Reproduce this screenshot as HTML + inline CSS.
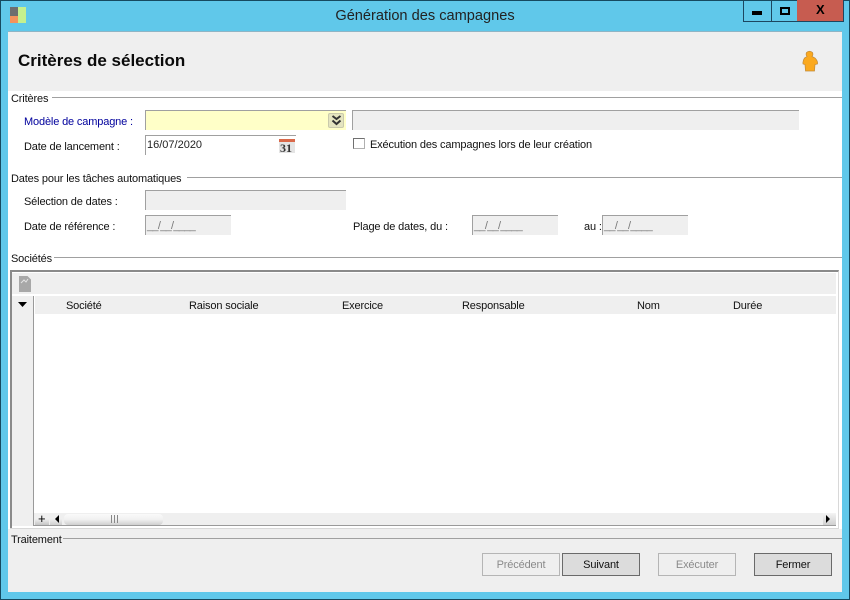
<!DOCTYPE html>
<html lang="fr"><head><meta charset="utf-8"><title>Génération des campagnes</title>
<style>
html,body{margin:0;padding:0;background:#fff}
body{position:relative;width:850px;height:600px;overflow:hidden;font:11px "Liberation Sans",sans-serif;letter-spacing:-.15px;color:#111}
div,span{position:absolute;box-sizing:border-box}
.t{white-space:nowrap;line-height:14px}
.l{height:1px;background:#a0a0a0}
.f{background:#efefef;border-top:1px solid #a0a0a0;border-left:1px solid #a0a0a0}
.m{color:#777;font-size:11px;padding-left:1px;line-height:21px;letter-spacing:-.7px}
.b{height:23px;width:78px;top:553px;border:1px solid #6a6a6a;background:#dcdcdc;text-align:center;line-height:23px}
.d{border-color:#b5b5b5;background:#efefef;color:#8a8a8a}
.h{top:299px}
.w{top:0;height:22px;border:1px solid #1c4660;border-top:0}
</style></head><body>
<div style="left:0;top:0;width:850px;height:600px;background:#60c8ea;border:1px solid #164a60"></div>
<div style="left:10px;top:7px;width:8px;height:9px;background:#6e6e6e"></div>
<div style="left:10px;top:16px;width:8px;height:7px;background:#f4935c"></div>
<div style="left:18px;top:7px;width:8px;height:16px;background:#c5f08e"></div>
<div class="t" style="left:0;top:8px;width:850px;text-align:center;font-size:14.6px;line-height:16px;letter-spacing:0;color:#222">Génération des campagnes</div>
<div class="w" style="left:743px;width:29px"><span style="left:8px;top:11px;width:10px;height:4px;background:#000"></span></div>
<div class="w" style="left:771px;width:27px;border-left:0"><span style="left:9px;top:7px;width:10px;height:8px;border:2px solid #000"></span></div>
<div class="w" style="left:797px;width:47px;background:#c75c50;border-left:0"><span class="t" style="left:19px;top:3px;font-size:13px;font-weight:bold;letter-spacing:0;color:#000">X</span></div>

<div style="left:8px;top:31px;width:834px;height:561px;background:#fff"></div>
<div style="left:8px;top:31px;width:834px;height:60px;background:#efefef;border-top:1px solid #8fb5c5"></div>
<div class="t" style="left:18px;top:51px;font-size:17px;line-height:20px;font-weight:bold;letter-spacing:0;color:#0a0a0a">Critères de sélection</div>
<svg style="position:absolute;left:800px;top:50px" width="20" height="22" viewBox="0 0 20 22"><path d="M6.500 2.500Q9.500 0 12.500 2.500Q13.500 5 12 6.500L15 8Q18 11 17.500 14L15 14.500L14.500 21L5.500 21L5 14.500L3 14Q2.500 11 4.500 8L7 6.500Q5.500 5 6.500 2.500Z" fill="#fba91e" stroke="#c08a3c" stroke-width=".7"/></svg>

<div class="t" style="left:11px;top:92px">Critères</div>
<div class="l" style="left:52px;top:97px;width:790px"></div>
<div class="t" style="left:24px;top:115px;color:#00009c">Modèle de campagne :</div>
<div style="left:145px;top:110px;width:201px;height:20px;background:#ffffc8;border-top:1px solid #a0a0a0;border-left:1px solid #a0a0a0"></div>
<div style="left:328px;top:113px;width:16px;height:15px;background:#e4e4c0;border:1px solid #c9c9ac;border-radius:2px"></div>
<svg style="position:absolute;left:331px;top:114px" width="11" height="13" viewBox="0 0 11 13"><path d="M1.500 2L5.500 5L9.500 2M1.500 6.500L5.500 10L9.500 6.500" fill="none" stroke="#333" stroke-width="2"/></svg>
<div class="f" style="left:352px;top:110px;width:447px;height:20px"></div>
<div class="t" style="left:24px;top:140px">Date de lancement :</div>
<div style="left:145px;top:135px;width:151px;height:20px;border-top:1px solid #a0a0a0;border-left:1px solid #a0a0a0"></div>
<div class="t" style="left:147px;top:138px;letter-spacing:0;color:#222">16/07/2020</div>
<div style="left:279px;top:139px;width:16px;height:14px;background:#e4e4e4;border-top:3px solid #d9694a"></div>
<div class="t" style="left:280px;top:142px;font:bold 12px/12px 'Liberation Serif',serif;letter-spacing:0;color:#333">31</div>
<div style="left:353px;top:138px;width:12px;height:11px;border:1px solid #b0b0b0;border-top-color:#707070;border-left-color:#707070;background:#fff"></div>
<div class="t" style="left:370px;top:138px">Exécution des campagnes lors de leur création</div>

<div class="t" style="left:11px;top:172px">Dates pour les tâches automatiques</div>
<div class="l" style="left:187px;top:177px;width:655px"></div>
<div class="t" style="left:24px;top:195px">Sélection de dates :</div>
<div class="f" style="left:145px;top:190px;width:201px;height:20px"></div>
<div class="t" style="left:24px;top:220px">Date de référence :</div>
<div class="f m" style="left:145px;top:215px;width:86px;height:20px">__/__/____</div>
<div class="t" style="left:353px;top:220px">Plage de dates, du :</div>
<div class="f m" style="left:472px;top:215px;width:86px;height:20px">__/__/____</div>
<div class="t" style="left:584px;top:220px">au :</div>
<div class="f m" style="left:602px;top:215px;width:86px;height:20px">__/__/____</div>

<div class="t" style="left:11px;top:252px">Sociétés</div>
<div class="l" style="left:54px;top:257px;width:788px"></div>
<div style="left:10px;top:270px;width:829px;height:259px;background:#fff;border:1px solid #d8d8d8;border-top:2px solid #8a8a8a;border-left:2px solid #8a8a8a"></div>
<div style="left:12px;top:273px;width:824px;height:21px;background:#efefef"></div>
<svg style="position:absolute;left:19px;top:276px" width="13" height="16" viewBox="0 0 13 16"><path d="M0 0H8.500L12 3.500V16H0Z" fill="#a8a8a8"/><path d="M2 7L5 4L7 6L9 3" fill="none" stroke="#e4e4e4"/></svg>
<div style="left:12px;top:296px;width:22px;height:230px;background:#efefef;border-right:1px solid #9a9a9a"></div>
<svg style="position:absolute;left:18px;top:302px" width="10" height="6"><path d="M0 0H9L4.500 5Z" fill="#000"/></svg>
<div style="left:35px;top:296px;width:801px;height:18px;background:#efefef"></div>
<div class="t h" style="left:66px">Société</div>
<div class="t h" style="left:189px">Raison sociale</div>
<div class="t h" style="left:342px">Exercice</div>
<div class="t h" style="left:462px">Responsable</div>
<div class="t h" style="left:637px">Nom</div>
<div class="t h" style="left:733px">Durée</div>
<div style="left:34px;top:513px;width:802px;height:13px;background:#efefef;border-bottom:1px solid #9a9a9a"></div>
<div style="left:35px;top:513px;width:14px;height:12px;background:linear-gradient(#f0f0f0 50%,#c4c4c4)"></div>
<div class="t" style="left:38px;top:512px;font-size:13px;color:#000">+</div>
<div style="left:50px;top:513px;width:12px;height:12px;background:linear-gradient(#efefef 50%,#cfcfcf)"></div>
<svg style="position:absolute;left:55px;top:515px" width="5" height="9"><path d="M4 0V8L0 4Z" fill="#000"/></svg>
<div style="left:64px;top:514px;width:99px;height:11px;background:linear-gradient(#fafafa,#f0f0f0 50%,#cfcfcf);border-radius:4px"></div>
<div style="left:111px;top:515px;width:1px;height:8px;background:#888"></div>
<div style="left:114px;top:515px;width:1px;height:8px;background:#888"></div>
<div style="left:117px;top:515px;width:1px;height:8px;background:#888"></div>
<div style="left:823px;top:513px;width:13px;height:12px;background:linear-gradient(#f4f4f4,#cfcfcf)"></div>
<svg style="position:absolute;left:826px;top:515px" width="5" height="9"><path d="M0 0V8L4 4Z" fill="#000"/></svg>

<div style="left:8px;top:529px;width:834px;height:63px;background:#efefef"></div>
<div style="left:10px;top:528px;width:829px;height:1px;background:#d8d8d8"></div>
<div class="l" style="left:63px;top:538px;width:779px"></div>
<div class="t" style="left:11px;top:533px">Traitement</div>
<div class="b d" style="left:482px">Précédent</div>
<div class="b" style="left:562px">Suivant</div>
<div class="b d" style="left:658px">Exécuter</div>
<div class="b" style="left:754px">Fermer</div>
</body></html>
